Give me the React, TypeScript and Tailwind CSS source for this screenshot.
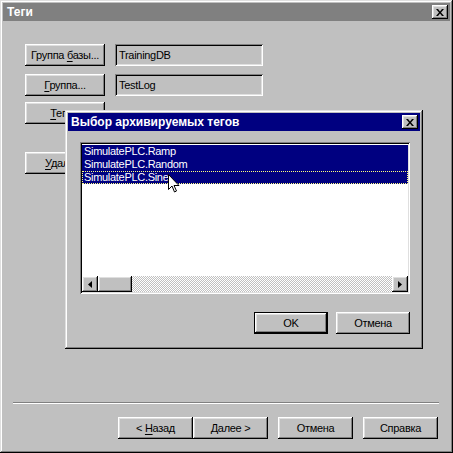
import React from "react";

const RAISED =
  "shadow-[inset_-1px_-1px_#000,inset_1px_1px_#fff,inset_-2px_-2px_#808080,inset_2px_2px_#dfdfdf]";
const SUNKEN =
  "shadow-[inset_1px_1px_#808080,inset_-1px_-1px_#fff,inset_2px_2px_#000,inset_-2px_-2px_#dfdfdf]";
const WINDOW =
  "shadow-[inset_-1px_-1px_#000,inset_1px_1px_#dfdfdf,inset_-2px_-2px_#808080,inset_2px_2px_#fff]";

function Btn({
  children,
  className = "",
}: {
  children: React.ReactNode;
  className?: string;
}) {
  return (
    <div
      className={`h-[22px] bg-[#c0c0c0] flex items-center justify-center text-black whitespace-nowrap ${RAISED} ${className}`}
    >
      <span>{children}</span>
    </div>
  );
}

function CloseBtn() {
  return (
    <div
      className={`w-[16px] h-[14px] bg-[#c0c0c0] flex items-center justify-center ${RAISED}`}
    >
      <svg width="8" height="7" viewBox="0 0 8 7">
        <path d="M0 0h2l2 2.5L6 0h2L5 3.5 8 7H6L4 4.5 2 7H0l3-3.5z" fill="#000" />
      </svg>
    </div>
  );
}

function U({ children }: { children: React.ReactNode }) {
  return <span className="underline underline-offset-2">{children}</span>;
}

function Arrow({ dir }: { dir: "left" | "right" }) {
  return (
    <div
      className={`w-[16px] h-[16px] shrink-0 bg-[#c0c0c0] flex items-center justify-center ${RAISED}`}
    >
      <svg width="4" height="7" viewBox="0 0 4 7">
        {dir === "left" ? (
          <path d="M4 0v7L0 3.5z" fill="#000" />
        ) : (
          <path d="M0 0v7l4-3.5z" fill="#000" />
        )}
      </svg>
    </div>
  );
}

export default function App() {
  return (
    <div
      className={`relative w-[453px] h-[453px] bg-[#c0c0c0] p-[3px] flex flex-col text-[11px] tracking-[-0.3px] ${WINDOW}`}
      style={{ fontFamily: "'Liberation Sans', Arial, sans-serif" }}
    >
      {/* Title bar */}
      <div className="h-[18px] bg-[#808080] flex items-center justify-between pl-[4px] pr-[2px]">
        <span className="text-white font-bold text-[12px] tracking-normal">Теги</span>
        <CloseBtn />
      </div>

      {/* Content */}
      <div className="flex-1 flex flex-col">
        <div className="mt-[23px] ml-[22px] flex flex-col">
          <div className="flex gap-[10px]">
            <Btn className="w-[80px]">
              Группа <U>б</U>азы...
            </Btn>
            <div
              className={`w-[148px] h-[22px] flex items-center pl-[4px] ${SUNKEN}`}
            >
              TrainingDB
            </div>
          </div>
          <div className="flex gap-[10px] mt-[8px]">
            <Btn className="w-[80px]">
              <U>Г</U>руппа...
            </Btn>
            <div
              className={`w-[148px] h-[22px] flex items-center pl-[4px] ${SUNKEN}`}
            >
              TestLog
            </div>
          </div>
          <div className="flex mt-[6px]">
            <Btn className="w-[80px]">
              <U>Т</U>еги...
            </Btn>
          </div>
          <div className="flex mt-[28px]">
            <Btn className="w-[80px]">
              <U>У</U>далить
            </Btn>
          </div>
        </div>

        <div className="flex-1" />

        {/* separator */}
        <div className="ml-[10px] mr-[11px] h-[2px] border-t border-t-[#808080] border-b border-b-white" />

        {/* wizard buttons */}
        <div className="flex justify-end mt-[13px] mr-[12px] mb-[11px]">
          <Btn className="w-[75px]">
            &lt; <U>Н</U>азад
          </Btn>
          <Btn className="w-[75px]">Далее &gt;</Btn>
          <Btn className="w-[75px] ml-[10px]">Отмена</Btn>
          <Btn className="w-[75px] ml-[10px]">Справка</Btn>
        </div>
      </div>

      {/* Inner dialog */}
      <div
        className={`absolute left-[65px] top-[110px] w-[358px] h-[239px] bg-[#c0c0c0] p-[3px] flex flex-col ${WINDOW}`}
      >
        <div className="h-[18px] bg-[#000080] flex items-center justify-between pl-[3px] pr-[2px]">
          <span className="text-white font-bold text-[12px] tracking-normal">
            Выбор архивируемых тегов
          </span>
          <CloseBtn />
        </div>

        <div
          className={`mt-[11px] ml-[12px] w-[330px] h-[152px] bg-white p-[2px] flex flex-col ${SUNKEN}`}
        >
          <div className="flex-1 flex flex-col pt-[1px]">
            <div className="h-[13px] leading-[13px] bg-[#000080] text-white pl-[2px]">
              SimulatePLC.Ramp
            </div>
            <div className="h-[13px] leading-[13px] bg-[#000080] text-white pl-[2px]">
              SimulatePLC.Random
            </div>
            <div className="h-[13px] leading-[13px] bg-[#000080] text-white pl-[2px] outline-1 outline-dotted outline-[#ffff80] -outline-offset-1">
              SimulatePLC.Sine
            </div>
          </div>
          <div className="h-[16px] flex">
            <Arrow dir="left" />
            <div className={`w-[34px] h-[16px] bg-[#c0c0c0] ${RAISED}`} />
            <div className="flex-1 h-[16px] bg-[repeating-conic-gradient(#c0c0c0_0_25%,#fff_0_50%)] bg-[length:2px_2px]" />
            <Arrow dir="right" />
          </div>
        </div>

        <div className="flex justify-end gap-[8px] mt-[18px] mr-[10px]">
          <div className="w-[74px] h-[22px] border border-black">
            <div
              className={`w-full h-full bg-[#c0c0c0] flex items-center justify-center ${RAISED}`}
            >
              OK
            </div>
          </div>
          <Btn className="w-[74px]">Отмена</Btn>
        </div>
      </div>

      {/* mouse cursor */}
      <svg
        className="absolute left-[168px] top-[174px]"
        width="12"
        height="19"
        viewBox="0 0 12 19"
      >
        <path
          d="M0.5 0.5v15l3.5-3.5 2.5 6 2-1-2.5-5.5h5z"
          fill="#fff"
          stroke="#000"
          strokeWidth="1"
        />
      </svg>
    </div>
  );
}
